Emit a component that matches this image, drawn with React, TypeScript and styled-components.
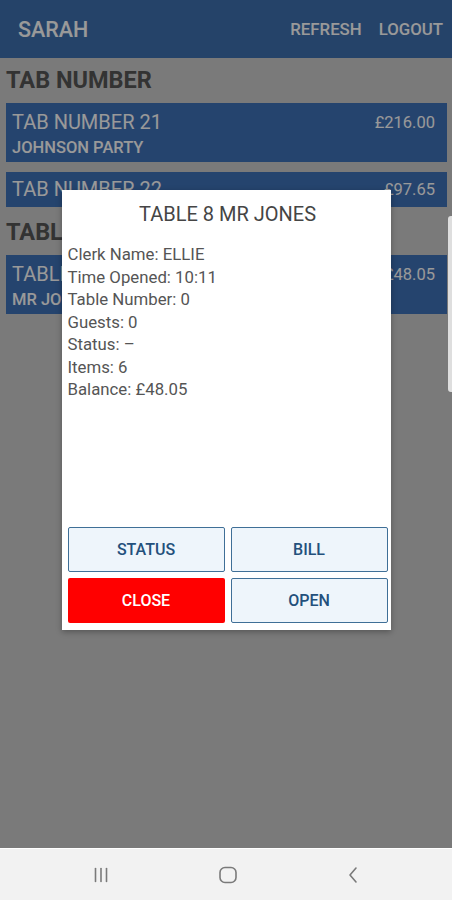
import styled, { createGlobalStyle } from "styled-components";

type Tab = {
  title: string;
  subtitle?: string;
  balance: string;
};

type Section = {
  heading: string;
  tabs: Tab[];
};

const sections: Section[] = [
  {
    heading: "TAB NUMBER",
    tabs: [
      { title: "TAB NUMBER 21", subtitle: "JOHNSON PARTY", balance: "£216.00" },
      { title: "TAB NUMBER 22", balance: "£97.65" },
    ],
  },
  {
    heading: "TABLE",
    tabs: [{ title: "TABLE 8", subtitle: "MR JONES", balance: "£48.05" }],
  },
];

const details = [
  "Clerk Name: ELLIE",
  "Time Opened: 10:11",
  "Table Number: 0",
  "Guests: 0",
  "Status: –",
  "Items: 6",
  "Balance: £48.05",
];

export default function App() {
  return (
    <>
      <GlobalStyle />
      <StyledScreen>
        <StyledPage>
          <StyledHeader>
            <StyledUser>SARAH</StyledUser>
            <StyledActions>
              <StyledAction>REFRESH</StyledAction>
              <StyledAction>LOGOUT</StyledAction>
            </StyledActions>
          </StyledHeader>
          <StyledContent>
            {sections.map((section) => (
              <StyledSection key={section.heading}>
                <StyledSectionHeading>{section.heading}</StyledSectionHeading>
                <StyledTabList>
                  {section.tabs.map((tab) => (
                    <StyledTabCard key={tab.title} $compact={!tab.subtitle}>
                      <StyledTabText>
                        <StyledTabTitle>{tab.title}</StyledTabTitle>
                        {tab.subtitle && <StyledTabSubtitle>{tab.subtitle}</StyledTabSubtitle>}
                      </StyledTabText>
                      <StyledTabBalance>{tab.balance}</StyledTabBalance>
                    </StyledTabCard>
                  ))}
                </StyledTabList>
              </StyledSection>
            ))}
          </StyledContent>
        </StyledPage>

        <StyledNavBar>
          <svg width="18" height="18" viewBox="0 0 18 18">
            <g stroke="#7a7a7a" strokeWidth="1.6" strokeLinecap="round">
              <line x1="3.5" y1="2.5" x2="3.5" y2="15.5" />
              <line x1="9" y1="2.5" x2="9" y2="15.5" />
              <line x1="14.5" y1="2.5" x2="14.5" y2="15.5" />
            </g>
          </svg>
          <svg width="20" height="18" viewBox="0 0 20 18">
            <rect x="2" y="1.5" width="16" height="15" rx="5" fill="none" stroke="#7a7a7a" strokeWidth="1.6" />
          </svg>
          <svg width="14" height="18" viewBox="0 0 14 18">
            <polyline points="10,2 4,9 10,16" fill="none" stroke="#7a7a7a" strokeWidth="1.6" strokeLinecap="round" strokeLinejoin="round" />
          </svg>
        </StyledNavBar>

        <StyledOverlay>
          <StyledDialog>
            <StyledDialogTitle>TABLE 8 MR JONES</StyledDialogTitle>
            <StyledDetails>
              {details.map((line) => (
                <div key={line}>{line}</div>
              ))}
            </StyledDetails>
            <StyledButtonGrid>
              <StyledDialogButton>STATUS</StyledDialogButton>
              <StyledDialogButton>BILL</StyledDialogButton>
              <StyledDialogButton $danger>CLOSE</StyledDialogButton>
              <StyledDialogButton>OPEN</StyledDialogButton>
            </StyledButtonGrid>
          </StyledDialog>
        </StyledOverlay>

        <StyledEdgeHandle />
      </StyledScreen>
    </>
  );
}

const GlobalStyle = createGlobalStyle`
  body {
    margin: 0;
    font-family: Roboto, "Liberation Sans", sans-serif;
  }
`;

const StyledScreen = styled.div`
  position: relative;
  width: 452px;
  height: 900px;
  display: flex;
  flex-direction: column;
  overflow: hidden;
`;

const StyledPage = styled.div`
  flex: 1;
  background-color: #cccccc;
  display: flex;
  flex-direction: column;
`;

const StyledHeader = styled.div`
  height: 58px;
  background-color: #3f71b0;
  display: flex;
  align-items: center;
  justify-content: space-between;
  padding: 0 9px 0 18px;
  color: #ffffff;
  font-weight: 500;
`;

const StyledUser = styled.div`
  font-size: 21.5px;
`;

const StyledActions = styled.div`
  display: flex;
  gap: 17px;
`;

const StyledAction = styled.div`
  font-size: 16.8px;
`;

const StyledContent = styled.div`
  display: flex;
  flex-direction: column;
  gap: 11px;
  padding: 8px 5px 0 6px;
`;

const StyledSection = styled.div`
  display: flex;
  flex-direction: column;
  gap: 8px;
`;

const StyledSectionHeading = styled.div`
  font-size: 23.5px;
  font-weight: 700;
  color: #555555;
  line-height: 29px;
`;

const StyledTabList = styled.div`
  display: flex;
  flex-direction: column;
  gap: 10px;
`;

const StyledTabCard = styled.div<{ $compact?: boolean }>`
  display: flex;
  justify-content: space-between;
  align-items: flex-start;
  background-color: #3f72b8;
  color: #ffffff;
  padding: ${({ $compact }) => ($compact ? "5px 12px 5px 6px" : "7px 12px 3px 6px")};
`;

const StyledTabText = styled.div`
  display: flex;
  flex-direction: column;
`;

const StyledTabTitle = styled.div`
  font-size: 20px;
  line-height: 25px;
`;

const StyledTabSubtitle = styled.div`
  font-size: 16.5px;
  font-weight: 500;
  line-height: 22px;
  margin-top: 2px;
`;

const StyledTabBalance = styled.div`
  font-size: 16.5px;
  line-height: 25px;
`;

const StyledNavBar = styled.div`
  height: 51px;
  border-top: 1px solid #ffffff;
  background-color: #f2f2f2;
  display: flex;
  align-items: center;
  justify-content: center;
  gap: 108px;
`;

const StyledOverlay = styled.div`
  position: absolute;
  top: 0;
  left: 0;
  right: 0;
  bottom: 52px;
  background-color: rgba(0, 0, 0, 0.4);
  display: flex;
  justify-content: center;
  padding-top: 190px;
`;

const StyledDialog = styled.div`
  width: 329px;
  height: 440px;
  background-color: #ffffff;
  box-shadow: 0 2px 6px rgba(0, 0, 0, 0.3);
  display: flex;
  flex-direction: column;
  padding: 0 3px 7px 6px;
  box-sizing: border-box;
`;

const StyledDialogTitle = styled.div`
  text-align: center;
  font-size: 20px;
  color: #454545;
  padding-top: 12px;
  line-height: 24px;
`;

const StyledDetails = styled.div`
  flex: 1;
  padding-top: 17px;
  font-size: 16.8px;
  line-height: 22.5px;
  color: #555555;
`;

const StyledButtonGrid = styled.div`
  display: grid;
  grid-template-columns: 1fr 1fr;
  gap: 6px;
`;

const StyledDialogButton = styled.button<{ $danger?: boolean }>`
  height: 45px;
  font-family: Roboto, "Liberation Sans", sans-serif;
  font-size: 16px;
  font-weight: 500;
  border-radius: 2px;
  border: ${({ $danger }) => ($danger ? "none" : "1.5px solid #3f6f97")};
  background-color: ${({ $danger }) => ($danger ? "#ff0000" : "#eef5fb")};
  color: ${({ $danger }) => ($danger ? "#ffffff" : "#23507c")};
`;

const StyledEdgeHandle = styled.div`
  position: absolute;
  right: 0;
  top: 216px;
  width: 4px;
  height: 176px;
  border-radius: 3px 0 0 3px;
  background-color: #dedede;
`;
